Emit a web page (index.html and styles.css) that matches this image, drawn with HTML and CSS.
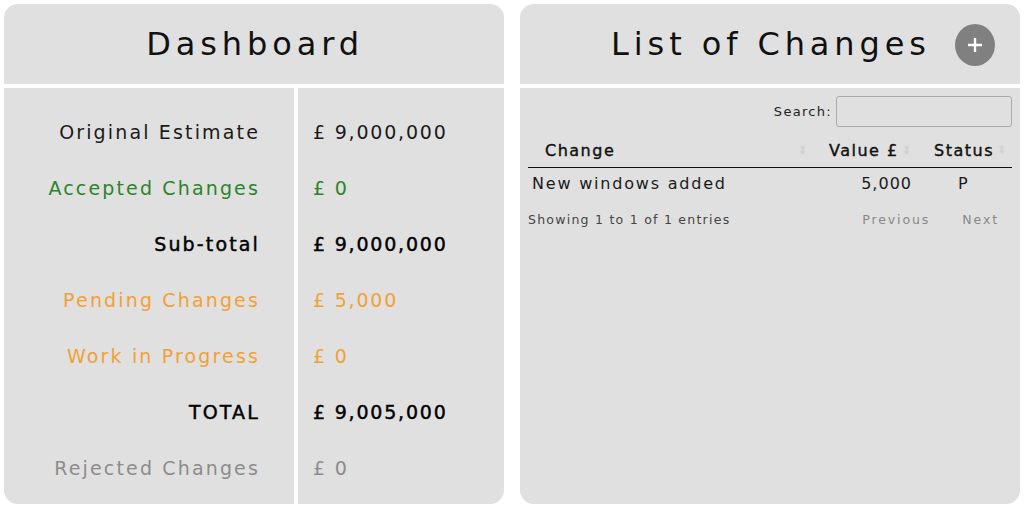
FILE: index.html
```html
<!DOCTYPE html>
<html lang="en">
<head>
<meta charset="utf-8">
<title>Dashboard</title>
<link rel="stylesheet" href="styles.css">
</head>
<body>
<div class="page">
  <section class="card">
    <header class="card-head">
      <h1 class="title">Dashboard</h1>
    </header>
    <div class="dash-body">
      <div class="dash-col labels">
        <div class="row">Original Estimate</div>
        <div class="row green">Accepted Changes</div>
        <div class="row strong">Sub-total</div>
        <div class="row orange">Pending Changes</div>
        <div class="row orange">Work in Progress</div>
        <div class="row strong">TOTAL</div>
        <div class="row grey">Rejected Changes</div>
      </div>
      <div class="dash-col values">
        <div class="row">£ 9,000,000</div>
        <div class="row green">£ 0</div>
        <div class="row strong">£ 9,000,000</div>
        <div class="row orange">£ 5,000</div>
        <div class="row orange">£ 0</div>
        <div class="row strong">£ 9,005,000</div>
        <div class="row grey">£ 0</div>
      </div>
    </div>
  </section>

  <section class="card">
    <header class="card-head">
      <h1 class="title">List of Changes</h1>
      <button class="add-btn" type="button" aria-label="Add change">
        <svg width="18" height="18" viewBox="0 0 18 18"><path d="M9 2v14M2 9h14" stroke="#fff" stroke-width="2.4" fill="none"/></svg>
      </button>
    </header>
    <div class="list-body">
      <div class="search-row">
        <label class="search-label" for="q">Search:</label>
        <input class="search-input" id="q" type="text">
      </div>
      <table class="changes">
        <colgroup>
          <col class="c1"><col class="c2"><col class="c3">
        </colgroup>
        <thead>
          <tr>
            <th class="th-change">Change<span class="sort">&#x2B0D;</span></th>
            <th class="th-value">Value £<span class="sort">&#x2B0D;</span></th>
            <th class="th-status">Status<span class="sort">&#x2B0D;</span></th>
          </tr>
        </thead>
        <tbody>
          <tr>
            <td class="td-change">New windows added</td>
            <td class="td-value">5,000</td>
            <td class="td-status">P</td>
          </tr>
        </tbody>
      </table>
      <div class="info-row">
        <span class="info">Showing 1 to 1 of 1 entries</span>
        <span class="pager"><span class="page-link">Previous</span><span class="page-link">Next</span></span>
      </div>
    </div>
  </section>
</div>
</body>
</html>
```

FILE: styles.css
```css
* { box-sizing: border-box; }
html, body { margin: 0; padding: 0; background: #ffffff; }
body {
  font-family: "DejaVu Sans", "Liberation Sans", sans-serif;
  color: #111;
}
.page {
  display: flex;
  gap: 16px;
  padding: 4px;
}
.card {
  width: 500px;
  height: 500px;
  display: flex;
  flex-direction: column;
  gap: 4px;
}
.card-head {
  position: relative;
  height: 80px;
  background: #e0e0e0;
  border-radius: 14px 14px 0 0;
  display: flex;
  align-items: center;
  justify-content: center;
}
.title {
  margin: 0;
  font-weight: 400;
  font-size: 32px;
  letter-spacing: 4.9px;
  color: #111;
  padding-left: 2px;
}
.add-btn {
  position: absolute;
  left: 435px;
  top: 20px;
  width: 40px;
  height: 42px;
  border-radius: 50%;
  border: none;
  background: #808080;
  display: flex;
  align-items: center;
  justify-content: center;
  padding: 0;
}

/* dashboard */
.dash-body {
  flex: 1;
  display: grid;
  grid-template-columns: 290px 206px;
  gap: 4px;
}
.dash-col {
  background: #e0e0e0;
  padding: 16px 0 8px;
  display: flex;
  flex-direction: column;
}
.labels { border-bottom-left-radius: 14px; padding-right: 34px; text-align: right; }
.values { border-bottom-right-radius: 14px; padding-left: 15px; }
.row {
  height: 56px;
  line-height: 56px;
  font-size: 19px;
  letter-spacing: 2.15px;
  color: #1a1a1a;
  white-space: nowrap;
}
.values .row { letter-spacing: 1.8px; }
.row.strong { color: #000; -webkit-text-stroke: 0.45px #000; }
.row.green { color: #2a852a; }
.row.orange { color: #f2a035; }
.row.grey { color: #8c8c8c; }

/* list */
.list-body {
  flex: 1;
  background: #e0e0e0;
  border-radius: 0 0 14px 14px;
  padding: 8px 8px;
}
.search-row {
  display: flex;
  justify-content: flex-end;
  align-items: center;
  gap: 4px;
}
.search-label {
  font-size: 13px;
  letter-spacing: 1.3px;
  color: #222;
}
.search-input {
  width: 176px;
  height: 31px;
  border: 1px solid #aaa;
  border-radius: 3px;
  background: #e0e0e0;
}
.changes {
  width: 484px;
  margin-top: 6px;
  border-collapse: collapse;
  table-layout: fixed;
}
.c1 { width: 292px; }
.c2 { width: 105px; }
.c3 { width: 87px; }
.changes th {
  position: relative;
  height: 34px;
  padding: 2px 0 0;
  text-align: left;
  font-size: 16px;
  font-weight: 400;
  letter-spacing: 1.5px;
  -webkit-text-stroke: 0.4px #111;
  border-bottom: 1px solid #111;
  color: #111;
}
.th-change { padding-left: 17px !important; }
.th-value { padding-left: 9px !important; }
.th-status { padding-left: 9px !important; }
.sort {
  position: absolute;
  right: 11px;
  top: 10px;
  font-size: 12px;
  font-weight: 400;
  -webkit-text-stroke: 0;
  color: #d2d2d2;
}
.th-value .sort { right: 12px; }
.th-status .sort { right: 4px; }
.changes td {
  height: 32px;
  font-size: 16px;
  letter-spacing: 1.8px;
  color: #1a1a1a;
  padding: 0;
}
.td-change { padding-left: 4px !important; }
.td-value { text-align: right; padding-right: 13px !important; letter-spacing: 1px !important; }
.td-status { padding-left: 33px !important; }
.info-row {
  display: flex;
  justify-content: space-between;
  align-items: center;
  height: 40px;
}
.info {
  font-size: 12.5px;
  letter-spacing: 1.25px;
  color: #444;
}
.pager { display: flex; gap: 32px; padding-right: 13px; }
.page-link {
  font-size: 12.5px;
  letter-spacing: 1.9px;
  color: #888;
}
```
